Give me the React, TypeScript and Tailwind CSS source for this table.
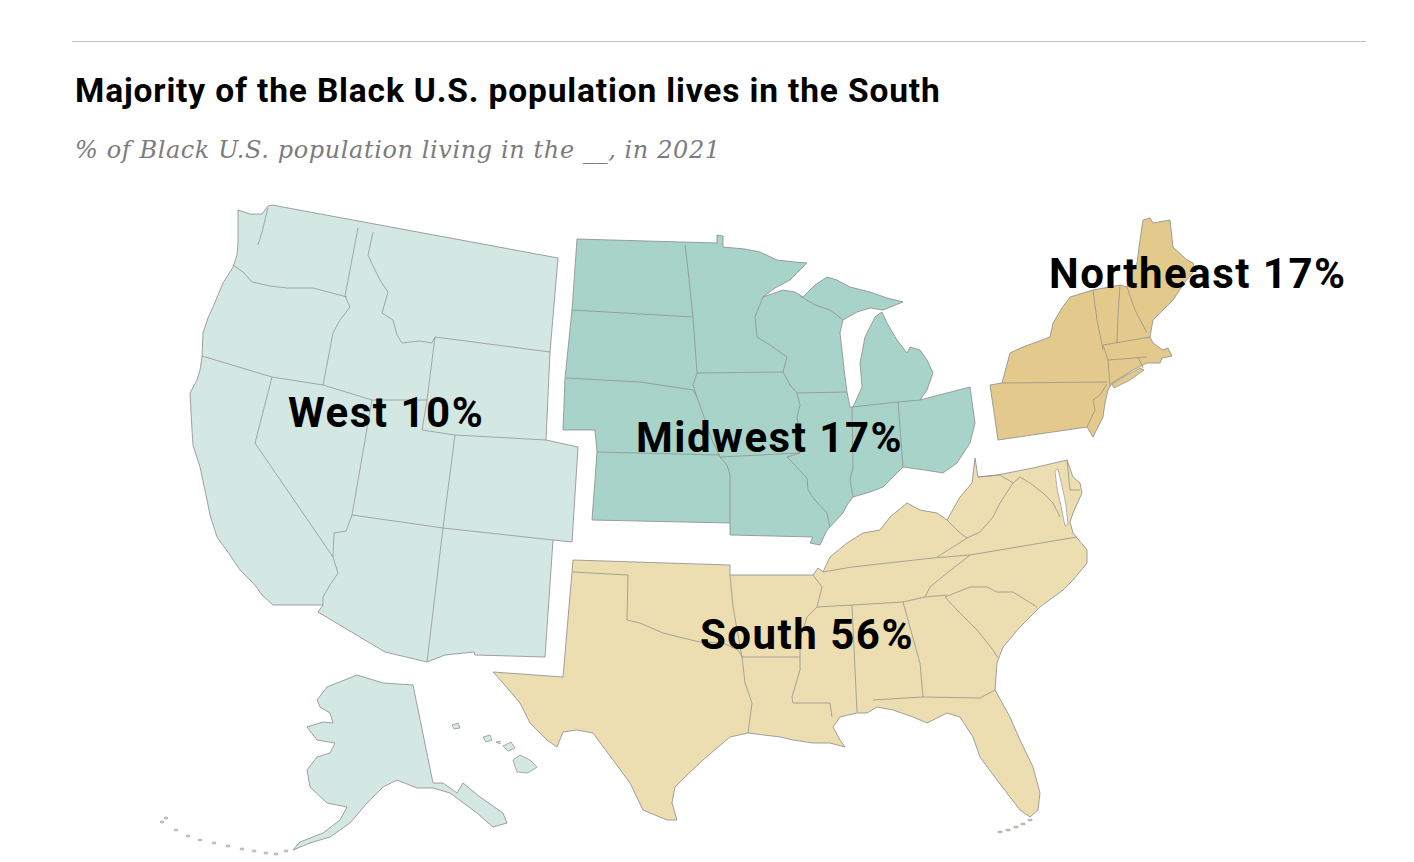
const WEST =
  "238,210 250,214 262,214 268,206 272,205 558,258 550,352 546,440 578,447 572,542 553,540 545,657 475,655 474,652 445,655 427,662 385,652 318,612 323,605 273,605 262,595 255,585 240,570 230,555 217,537 210,515 207,500 200,467 193,445 192,430 190,393 197,380 200,370 202,357 203,333 208,318 213,307 223,283 230,272 233,267 237,255 238,243";

const WEST_LINES = [
  "233,265 243,272 252,282 270,286 287,288 313,288 347,297",
  "358,228 345,296 350,307 340,320 333,333 323,385",
  "202,356 272,377 323,385 372,400 427,400",
  "373,232 368,255 374,268 380,280 388,292 382,313 393,320 397,335 402,343 420,341 432,343 435,337",
  "435,337 550,352",
  "435,337 427,400 422,430 455,435",
  "455,435 546,440",
  "272,377 255,443 333,557",
  "333,557 334,533 346,531 352,515 372,400",
  "455,435 443,528",
  "352,515 443,528 553,540",
  "443,528 427,662",
  "333,557 338,573 330,585 323,597 323,605",
];

const ALASKA =
  "317,700 327,687 357,675 383,683 413,685 433,783 443,783 457,793 463,783 480,797 503,813 507,823 493,827 477,813 450,793 433,788 417,788 397,780 383,787 367,803 350,823 330,837 310,843 293,850 300,842 323,833 340,820 347,807 327,803 310,787 307,770 317,757 330,753 335,743 317,740 307,727 323,722 333,723 330,713 320,707";

const MIDWEST =
  "577,239 717,243 717,235 723,236 723,247 745,249 760,252 777,260 795,262 807,263 790,280 775,288 763,297 783,290 795,292 803,297 815,285 827,277 837,280 850,287 870,292 887,298 903,302 883,310 870,308 857,312 843,320 840,333 845,377 847,392 850,407 853,407 862,387 860,363 865,337 875,317 882,312 887,323 897,340 907,353 910,347 920,350 927,360 933,373 927,390 920,400 970,387 975,423 970,443 957,463 943,473 925,470 903,467 900,470 890,480 883,487 870,492 853,497 847,505 843,513 830,527 827,530 820,545 810,543 813,537 730,535 730,523 592,520 597,452 595,430 563,430 565,378 572,310";

const MIDWEST_LINES = [
  "685,245 688,270 693,317",
  "572,310 693,317",
  "693,317 697,373 693,385 697,397",
  "566,378 640,382 660,385 680,388 693,390 697,397",
  "697,373 783,372",
  "763,297 755,317 757,337 770,345 787,357 783,372",
  "800,296 815,305 830,310 843,320",
  "697,397 705,420 712,440 720,457",
  "597,452 720,455",
  "720,457 727,465 730,475 730,523",
  "720,457 800,453",
  "783,372 790,385 797,393 800,405 797,417 800,435 800,453",
  "797,393 847,392",
  "800,453 787,457 795,465 807,478 808,490 815,500 827,513 830,527",
  "852,407 853,467 850,480 853,497",
  "852,407 898,402",
  "898,402 903,467",
  "898,402 920,400",
];

const NORTHEAST =
  "1143,220 1150,218 1153,223 1170,220 1173,247 1187,260 1193,263 1195,270 1185,282 1173,300 1163,310 1153,320 1150,337 1153,343 1163,350 1168,348 1172,356 1162,358 1160,363 1147,363 1133,370 1112,383 1108,390 1105,403 1103,417 1093,437 1087,427 998,440 990,385 1002,383 1010,353 1023,347 1050,337 1053,323 1062,308 1070,297 1093,290 1120,285 1127,287 1133,270 1137,263 1140,240";

const NORTHEAST_LINES = [
  "1002,383 1107,382",
  "1107,384 1100,395 1093,400 1095,410 1087,427",
  "1093,290 1097,320 1103,350",
  "1120,285 1118,315 1117,343",
  "1127,287 1135,310 1147,333",
  "1103,345 1108,360 1110,386",
  "1103,345 1150,337",
  "1108,360 1147,357",
  "1138,357 1143,368",
];

const LONG_ISLAND = "1112,384 1125,376 1140,368 1144,370 1130,380 1114,388";

const SOUTH =
  "493,672 563,677 573,560 730,565 730,575 813,575 818,568 823,572 830,557 847,543 863,533 880,530 890,517 907,503 920,510 937,513 947,520 960,497 972,483 975,458 978,477 997,475 1033,468 1067,460 1073,477 1080,483 1082,493 1073,513 1070,522 1073,533 1087,550 1087,563 1073,580 1063,590 1040,607 1020,627 1003,647 997,663 995,690 1010,717 1020,740 1033,767 1040,793 1038,810 1030,817 1020,810 1010,797 997,780 980,757 973,737 960,717 947,713 927,723 913,717 893,710 877,707 867,713 857,713 840,717 833,727 840,740 845,747 830,743 813,743 793,740 780,737 748,733 730,737 723,743 703,760 687,775 675,787 672,803 677,820 667,820 643,810 630,783 613,760 593,733 577,730 563,732 557,747 547,740 530,723 520,703 503,683";

const SOUTH_LINES = [
  "573,572 628,575 627,620 640,623 663,633 683,638 700,642 723,643 738,650 742,657",
  "730,575 733,607 742,657",
  "742,657 800,657",
  "742,657 745,683 752,703 748,733",
  "813,575 822,587 817,607 807,617 800,640 800,670 792,697 793,703",
  "793,703 830,703 832,717",
  "817,607 852,605 903,602 925,597 947,595",
  "852,605 857,712",
  "903,602 920,663 923,697",
  "873,700 923,697 980,698 995,690",
  "945,597 957,610 977,630 993,650 998,658",
  "945,597 970,587 987,587 997,592 1013,592 1037,607",
  "970,555 960,563 947,573 930,587 925,597",
  "823,572 852,567 933,558 970,555 1077,537",
  "947,520 960,533 967,538 953,547 937,557",
  "967,538 980,532 993,517 1000,503 1013,483 1020,477 1030,483",
  "978,477 1000,475 1013,483",
  "1030,483 1043,493 1053,503 1060,517",
  "1067,460 1070,490 1080,490",
];

// Chesapeake Bay, cut out of the South as a thin white wedge
const BAY = "1055,471 1058,469 1062,486 1066,505 1068,524 1065,526 1061,506 1057,488";

const HAWAII = [
  "513,760 520,755 530,760 537,767 528,773 517,772",
  "503,746 511,742 515,748 508,751",
  "483,737 490,735 492,740 486,742",
  "452,725 458,723 460,728 454,729",
  "496,742 500,741 500,744",
];

const ALEUTIANS: [number, number][] = [
  [286, 851], [276, 854], [266, 853], [254, 851], [242, 849], [228, 846],
  [214, 843], [200, 840], [188, 836], [176, 830], [166, 818], [162, 822],
];

const KEYS: [number, number][] = [
  [1000, 832], [1008, 830], [1016, 827], [1023, 824], [1030, 820],
];

const STROKE = "#8a8a8a";

function Region({
  outline,
  lines,
  fill,
}: {
  outline: string;
  lines: string[];
  fill: string;
}) {
  return (
    <g>
      <polygon points={outline} fill={fill} stroke={STROKE} strokeWidth={0.8} strokeLinejoin="round" />
      {lines.map((l) => (
        <polyline key={l} points={l} fill="none" stroke={STROKE} strokeWidth={0.7} strokeLinejoin="round" />
      ))}
    </g>
  );
}

function Label({ x, y, children }: { x: number; y: number; children: string }) {
  return (
    <text
      x={x}
      y={y}
      fill="#000"
      fontSize={42}
      fontWeight={700}
      style={{ fontFamily: "Roboto, 'Liberation Sans', sans-serif", letterSpacing: "1.5px" }}
    >
      {children}
    </text>
  );
}

function UsMap() {
  return (
    <svg className="block" width={1414} height={672} viewBox="0 190 1414 672">
      <Region outline={WEST} lines={WEST_LINES} fill="#d4e8e3" />
      <polyline points="268,208 265,220 262,232 258,245" fill="none" stroke={STROKE} strokeWidth={0.7} />
      <Region outline={ALASKA} lines={[]} fill="#d4e8e3" />
      {HAWAII.map((p) => (
        <polygon key={p} points={p} fill="#d4e8e3" stroke={STROKE} strokeWidth={0.7} />
      ))}
      {ALEUTIANS.map(([cx, cy]) => (
        <ellipse key={`${cx}-${cy}`} cx={cx} cy={cy} rx={2} ry={1} fill="#d4e8e3" stroke={STROKE} strokeWidth={0.6} />
      ))}
      <Region outline={MIDWEST} lines={MIDWEST_LINES} fill="#a8d3c8" />
      <Region outline={NORTHEAST} lines={NORTHEAST_LINES} fill="#e3c98b" />
      <polygon points={LONG_ISLAND} fill="#e3c98b" stroke={STROKE} strokeWidth={0.7} />
      <Region outline={SOUTH} lines={SOUTH_LINES} fill="#ecdeb1" />
      <polygon points={BAY} fill="#fff" stroke={STROKE} strokeWidth={0.6} />
      {KEYS.map(([cx, cy]) => (
        <ellipse key={`${cx}-${cy}`} cx={cx} cy={cy} rx={2.5} ry={0.9} fill="#ecdeb1" stroke={STROKE} strokeWidth={0.6} />
      ))}

      <Label x={288} y={427}>West 10%</Label>
      <Label x={636} y={452}>Midwest 17%</Label>
      <Label x={1049} y={288}>Northeast 17%</Label>
      <Label x={700} y={649}>South 56%</Label>
    </svg>
  );
}

export default function App() {
  return (
    <div className="min-h-screen w-[1414px] overflow-hidden bg-white">
      <div className="h-[190px]">
        <div className="ml-[72px] mr-[48px] h-[42px] border-b border-[#c4c4c4]" />
        <h1 className="mt-[29px] pl-[75px] font-['Roboto','Liberation_Sans',sans-serif] text-[33.5px] font-bold leading-[40px] tracking-[0.85px] text-black">
          Majority of the Black U.S. population lives in the South
        </h1>
        <p className="mt-[24px] pl-[75px] font-['DejaVu_Serif',serif] text-[24px] italic leading-[30px] tracking-[0.6px] text-[#7c7c7c]">
          % of Black U.S. population living in the __, in 2021
        </p>
      </div>
      <UsMap />
    </div>
  );
}
